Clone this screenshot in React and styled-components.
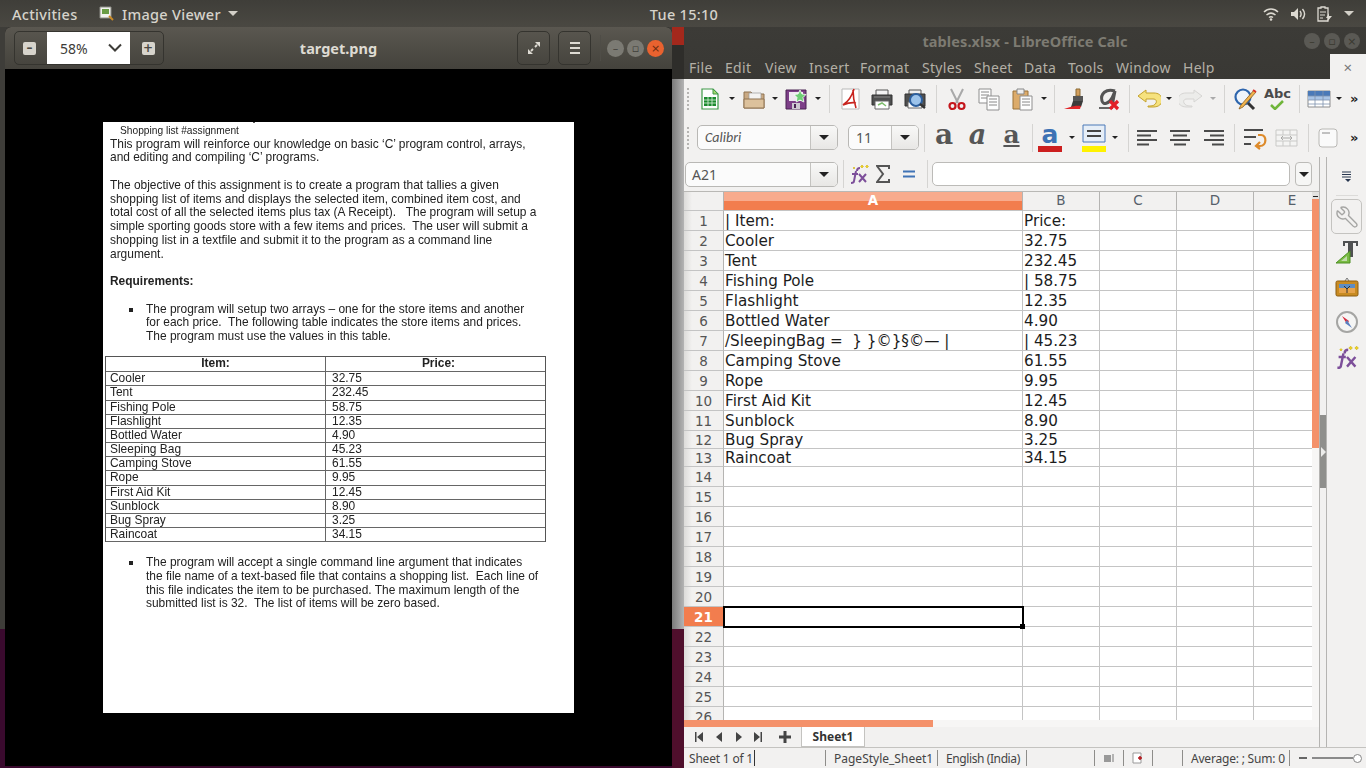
import React from 'react';
import styled, { createGlobalStyle } from 'styled-components';
import { Wrench as WrenchGlyph } from 'lucide-react';

const uiFont = `"Noto Sans", "DejaVu Sans", sans-serif`;
const orange = '#f4916a';

const Global = createGlobalStyle`
html, body { margin: 0; padding: 0; background: #000; }
* { box-sizing: border-box; }
`;

const Desktop = styled.div`
position: relative;
width: 1366px;
height: 768px;
overflow: hidden;
background: #3a0a2e;
font-family: ${uiFont};
`;

/* desktop top bar */
const TopBar = styled.div`
height: 27px;
display: flex;
align-items: center;
background: linear-gradient(#3f3e39, #4a4842);
color: #d6d3cb;
font-size: 14.5px;
font-weight: 500;
letter-spacing: 0.3px;
`;
const Activities = styled.div`
width: 99px;
padding-left: 12px;
`;
const AppMenu = styled.div`
width: 483px;
display: flex;
align-items: center;
gap: 7px;
`;
const Clock = styled.div`
width: 204px;
text-align: center;
`;
const Tray = styled.div`
flex: 1;
display: flex;
justify-content: flex-end;
align-items: center;
gap: 11px;
padding-right: 12px;
`;
const Caret = styled.span`
display: inline-block;
width: 0;
height: 0;
border-left: ${p => p.$s || 5}px solid transparent;
border-right: ${p => p.$s || 5}px solid transparent;
border-top: ${p => p.$s || 5}px solid ${p => p.$c || '#d3d0c8'};
`;

/* windows behind */
const BackWindow = styled.div`
position: absolute;
left: 0;
top: 27px;
width: 684px;
height: 602px;
background: #3e3d39;
`;
const RedCorner = styled.div`
position: absolute;
left: 672px;
top: 27px;
width: 12px;
height: 18px;
background: #a3281c;
`;
const BackShade = styled.div`
position: absolute;
left: 672px;
top: 45px;
width: 12px;
height: 34px;
background: #2e2d2a;
`;
const BackGrey = styled.div`
position: absolute;
left: 672px;
top: 79px;
width: 12px;
height: 550px;
background: linear-gradient(90deg, #7a7a7a, #b4b4b4);
`;
const BackMaroon = styled.div`
position: absolute;
left: 672px;
top: 629px;
width: 12px;
height: 139px;
background: #4f0f2c;
`;

/* image viewer window */
const ViewerWindow = styled.div`
position: absolute;
left: 5px;
top: 27px;
width: 667px;
height: 739px;
display: flex;
flex-direction: column;
background: #000;
border-radius: 6px 6px 0 0;
overflow: hidden;
`;
const ViewerHeader = styled.div`
height: 42px;
display: flex;
align-items: center;
padding: 0 8px 0 9px;
background: linear-gradient(#5a5750, #44423c);
color: #dedbd3;
`;
const ZoomGroup = styled.div`
width: 150px;
height: 34px;
display: flex;
border: 1px solid #35342f;
border-radius: 5px;
overflow: hidden;
`;
const ZoomBtn = styled.div`
width: ${p => p.$w}px;
padding: ${p => p.$pad};
display: flex;
align-items: center;
justify-content: center;
`;
const ZoomSquare = styled.div`
width: 13px;
height: 13px;
border-radius: 2px;
background: #d7d4cc;
display: flex;
align-items: center;
justify-content: center;
color: #4a4842;
font: bold 12px/13px "DejaVu Sans", sans-serif;
`;
const ZoomField = styled.div`
flex: 1;
background: #fff;
display: flex;
align-items: center;
justify-content: space-between;
padding: 0 8px 0 13px;
font-size: 14px;
color: #3d3c38;
`;
const ViewerTitle = styled.div`
flex: 1;
text-align: center;
font-size: 14.5px;
font-weight: 700;
padding-left: 4px;
`;
const HeaderBtn = styled.div`
width: 33px;
height: 34px;
margin-left: 8px;
display: flex;
align-items: center;
justify-content: center;
border: 1px solid #35342f;
border-radius: 5px;
`;
const HeaderSep = styled.div`
width: 1px;
height: 26px;
margin: 0 6px 0 9px;
background: #4f4d47;
`;
const WinDots = styled.div`
display: flex;
gap: ${p => p.$gap}px;
align-items: center;
`;
const WinDot = styled.div`
width: ${p => p.$s}px;
height: ${p => p.$s}px;
border-radius: 50%;
display: flex;
align-items: center;
justify-content: center;
background: ${p => p.$bg};
color: ${p => p.$fg};
font: 11px/1 "DejaVu Sans", sans-serif;
`;
const ViewerBody = styled.div`
flex: 1;
padding: 53px 0 0 98px;
`;
const Page = styled.div`
position: relative;
width: 471px;
height: 591px;
background: #fff;
padding: 1.5px 20px 0 7px;
color: #222;
font: 11.95px/13.75px "Liberation Sans", Arial, sans-serif;
white-space: pre;
filter: blur(0.3px);
&::before {
  content: '';
  position: absolute;
  left: 150px;
  top: 0;
  width: 2px;
  height: 1px;
  background: #555;
}
`;
const PageHead = styled.div`
font-size: 10.2px;
line-height: 14px;
padding-left: 10px;
`;
const Para = styled.p`
margin: 0 0 13.75px;
`;
const PageHeading = styled(Para)`
font-weight: 700;
`;
const BulletList = styled.ul`
margin: 0 0 12.5px;
padding: 0 0 0 36px;
list-style: none;
position: relative;
`;
const Bullet = styled.li`
&::before {
  content: '';
  position: absolute;
  left: 19px;
  top: 5px;
  width: 4px;
  height: 4px;
  background: #222;
}
`;
const DocTable = styled.div`
width: 441px;
margin: 0 0 14px -5px;
border: 1px solid #555;
border-bottom: 0;
`;
const DocRow = styled.div`
display: grid;
grid-template-columns: 219px 1fr;
height: ${p => p.$h}px;
border-bottom: 1px solid #666;
line-height: 12.5px;
`;
const DocCell = styled.div`
padding-left: ${p => (p.$head ? 0 : 5)}px;
text-align: ${p => (p.$head ? 'center' : 'left')};
font-weight: ${p => (p.$head ? 700 : 400)};
&:first-child { padding-left: ${p => (p.$head ? 0 : 4)}px; }
& + & { border-left: 1px solid #666; padding-left: ${p => (p.$head ? 0 : 6)}px; }
`;

/* calc window */
const CalcWindow = styled.div`
position: absolute;
left: 684px;
top: 27px;
width: 682px;
height: 741px;
display: flex;
flex-direction: column;
background: #f2f1f0;
color: #3c3c3c;
`;
const CalcTitleBar = styled.div`
height: 52px;
background: linear-gradient(#3c3b37, #393834);
display: flex;
flex-direction: column;
`;
const CalcTitleRow = styled.div`
height: 27px;
display: flex;
align-items: center;
justify-content: center;
position: relative;
color: #7d7b72;
font-size: 14.5px;
font-weight: 700;
letter-spacing: 0.1px;
`;
const CalcDots = styled.div`
position: absolute;
right: 6px;
top: 6px;
`;
const MenuBar = styled.div`
flex: 1;
display: flex;
align-items: center;
padding-left: 5px;
color: #b4b0a6;
font-size: 14px;
letter-spacing: 0.3px;
`;
const MenuItem = styled.div`
width: ${p => p.$w}px;
flex: none;
padding-top: 1px;
`;
const DocClose = styled.div`
margin-left: auto;
width: 36px;
height: 100%;
background: #f2f1f0;
color: #777;
display: flex;
align-items: center;
justify-content: center;
font-size: 15px;
`;
const ToolRow = styled.div`
height: ${p => p.$h}px;
display: flex;
align-items: center;
flex: none;
`;
const Grip = styled.div`
width: 10px;
height: 24px;
flex: none;
background: radial-gradient(circle, #b5b4b2 1px, transparent 1.2px) 2px 0 / 4px 4px repeat-y;
`;
const Slot = styled.div`
width: ${p => p.$w}px;
flex: none;
display: flex;
align-items: center;
justify-content: center;
`;
const Sep = styled.div`
width: 10px;
flex: none;
height: 28px;
display: flex;
justify-content: center;
&::after { content: ''; width: 1px; background: #d5d4d2; }
`;
const More = styled.div`
margin-left: auto;
width: 16px;
font: bold 13px/1 "DejaVu Sans", sans-serif;
color: #222;
`;
const Combo = styled.div`
width: ${p => p.$w}px;
height: 25px;
flex: none;
display: flex;
background: #fbfbfb;
border: 1px solid #b9b8b5;
border-radius: 5px;
overflow: hidden;
font: ${p => (p.$italic ? 'italic' : 'normal')} 14px/23px ${p => (p.$italic ? '"Carlito", "Open Sans"' : uiFont)}, sans-serif;
color: #555;
`;
const ComboText = styled.div`
flex: 1;
padding-left: ${p => p.$pad || 7}px;
`;
const ComboArrow = styled.div`
width: 27px;
display: flex;
align-items: center;
justify-content: center;
background: linear-gradient(#f8f8f7, #e8e7e5);
border-left: 1px solid #c4c3c0;
`;
const StyleA = styled.span`
font-family: "DejaVu Serif", serif;
font-weight: 700;
font-size: ${p => p.$size}px;
line-height: 24px;
height: 24px;
margin-top: -6px;
color: #565656;
font-style: ${p => (p.$i ? 'italic' : 'normal')};
text-decoration: ${p => (p.$u ? 'underline' : 'none')};
text-decoration-thickness: 2px;
text-underline-offset: 2px;
`;
const FontColorA = styled.div`
width: 24px;
height: 28px;
display: flex;
flex-direction: column;
align-items: center;
justify-content: space-between;
color: #3d72b4;
font: bold 25px/21px "DejaVu Sans", sans-serif;
`;
const ColorBar = styled.div`
width: 24px;
height: 6px;
flex: none;
background: ${p => p.$c};
`;

const CalcMain = styled.div`
flex: 1;
min-height: 0;
display: flex;
`;
const SheetColumn = styled.div`
width: 635px;
flex: none;
display: flex;
flex-direction: column;
`;
const FormulaRow = styled(ToolRow)`
padding-left: 1px;
`;
const FormulaInput = styled.div`
width: 358px;
height: 24px;
flex: none;
background: #fff;
border: 1px solid #bcbbb8;
border-radius: 5px;
`;
const FormulaDrop = styled.div`
width: 17px;
height: 24px;
flex: none;
margin-left: 5px;
display: flex;
align-items: center;
justify-content: center;
background: #f6f6f5;
border: 1px solid #bcbbb8;
border-radius: 4px;
`;
const SheetBody = styled.div`
flex: 1;
min-height: 0;
display: flex;
border-top: 1px solid #b9b8b5;
`;
const Grid = styled.div`
width: 628px;
flex: none;
overflow: hidden;
background: #fff;
font: 15.2px/1 "DejaVu Sans", sans-serif;
color: #1c1c1c;
`;
const GridRow = styled.div`
display: flex;
height: ${p => p.$h}px;
`;
const RowHead = styled.div`
width: 40px;
flex: none;
display: flex;
align-items: center;
justify-content: center;
padding-top: 2px;
font-size: 13.5px;
border-right: 1px solid #b5b4b2;
border-bottom: 1px solid #c4c4c4;
color: ${p => (p.$on ? '#fff' : '#555')};
font-weight: ${p => (p.$on ? 700 : 400)};
background: ${p => (p.$on ? '#f27d4e' : 'linear-gradient(90deg, #dcdbd9, #f2f1f0 8px)')};
`;
const ColHead = styled.div`
width: ${p => p.$w}px;
flex: none;
display: flex;
align-items: center;
justify-content: center;
font-size: 13.5px;
border-right: 1px solid #b5b4b2;
border-bottom: 1px solid #c4c4c4;
color: ${p => (p.$on ? '#fff' : '#56606a')};
font-weight: ${p => (p.$on ? 700 : 400)};
background: ${p => (p.$on ? 'linear-gradient(#f8ab8d 50%, #f27d4e 50%)' : '#f2f1f0')};
`;
const Cell = styled.div`
position: relative;
width: ${p => p.$w}px;
flex: none;
padding: 3px 0 0 1px;
white-space: pre;
display: flex;
align-items: center;
border-right: 1px solid #c4c4c4;
border-bottom: 1px solid #c4c4c4;
${p => p.$sel && `
  outline: 2px solid #000;
  outline-offset: -1px;
  z-index: 1;
  &::after {
    content: '';
    position: absolute;
    right: -3px;
    bottom: -3px;
    width: 5px;
    height: 5px;
    background: #000;
  }
`}
`;
const VScroll = styled.div`
width: 7px;
flex: none;
display: flex;
flex-direction: column;
background: #f7f6f5;
`;
const VScrollCap = styled.div`
height: 7px;
background: #e4e3e1;
border-top: 2px solid transparent;
display: flex;
align-items: center;
justify-content: center;
&::after { content: ''; width: 5px; height: 1px; background: #222; }
`;
const VScrollThumb = styled.div`
height: 249px;
background: ${orange};
`;
const HScrollRow = styled.div`
height: 7px;
flex: none;
display: flex;
background: #f7f6f5;
`;
const HScrollThumb = styled.div`
width: 249px;
background: ${orange};
`;
const TabsRow = styled.div`
height: 20px;
flex: none;
display: flex;
align-items: center;
`;
const SheetTab = styled.div`
width: 64px;
height: 20px;
display: flex;
align-items: center;
justify-content: center;
background: #fff;
border: 1px solid #c4c3c0;
border-top: 0;
font-size: 12px;
font-weight: 700;
color: #333;
`;
const SplitBar = styled.div`
width: 7px;
flex: none;
display: flex;
flex-direction: column;
padding-top: 258px;
border-left: 1px solid #b5b4b2;
`;
const SplitHandle = styled.div`
height: 73px;
background: #8f8f8c;
display: flex;
align-items: center;
justify-content: center;
&::after {
  content: '';
  border-top: 5px solid transparent;
  border-bottom: 5px solid transparent;
  border-left: 5px solid #ececea;
}
`;
const Sidebar = styled.div`
flex: 1;
display: flex;
flex-direction: column;
align-items: center;
border-left: 1px solid #b5b4b2;
padding-top: 14px;
`;
const SideSep = styled.div`
width: 22px;
height: 1px;
margin: 12px 0 3px;
background: #dcdbd9;
`;
const SideBtn = styled.div`
width: 31px;
height: 35px;
display: flex;
align-items: center;
justify-content: center;
${p => p.$on && `border: 1px solid #c4c3c0; border-radius: 5px;`}
`;
const FlippedWrench = styled(WrenchGlyph)`
transform: scaleX(-1);
color: #a5a5a3;
`;
const StatusBar = styled.div`
height: 21px;
flex: none;
display: flex;
align-items: center;
border-top: 1px solid #c4c3c0;
font-size: 12px;
color: #444;
`;
const StatusCell = styled.div`
width: ${p => p.$w}px;
flex: none;
height: 16px;
display: flex;
align-items: center;
justify-content: ${p => (p.$center ? 'center' : 'flex-start')};
padding-left: ${p => (p.$center ? 0 : p.$pad ?? 8)}px;
letter-spacing: ${p => p.$ls ?? -0.2}px;
border-right: 1px solid #8e8d8a;
white-space: nowrap;
`;
const TextCursor = styled.span`
width: 1px;
height: 16px;
margin-left: 1px;
background: #333;
`;
const SliderWrap = styled.div`
flex: 1;
display: flex;
align-items: center;
padding-left: 9px;
`;
const SliderDash = styled.div`
width: 8px;
height: 2px;
background: #666;
margin-right: 5px;
`;
const SliderLine = styled.div`
width: 41px;
height: 2px;
background: #8a8a8a;
`;
const SliderKnob = styled.div`
width: 9px;
height: 9px;
border: 1px solid #888;
border-radius: 50%;
background: #fff;
`;

/* icons */
const Svg = ({ w = 24, h = 24, children }) => (
  <svg width={w} height={h} viewBox={`0 0 ${w} ${h}`} fill="none">{children}</svg>
);
const Drop = () => <Caret $s={3} $c="#222" />;
const DropOff = () => <Caret $s={3} $c="#aaa" />;
const BigDrop = () => <Caret $s={5} $c="#222" />;

const NewDoc = () => (
  <Svg>
    <path d="M4 2h11l5 5v15H4z" fill="#fdfdfd" stroke="#3f9a48" strokeWidth="1.2" />
    <path d="M15 2v5h5z" fill="#a9d86e" stroke="#3f9a48" />
    <path d="M6 10h12v9H6z" fill="#1b8a2e" />
    <path d="M6 13h12M6 16h12M10 10v9M14 10v9" stroke="#dff2df" strokeWidth=".8" />
  </Svg>
);
const Folder = () => (
  <Svg>
    <path d="M2 5h7l2 2h11v14H2z" fill="#c9a983" stroke="#8f7251" />
    <path d="M7 6h12v7H7z" fill="#f4f3f1" stroke="#999" strokeWidth=".7" />
    <path d="M2 12h20v9H2z" fill="#dcc19c" stroke="#8f7251" />
  </Svg>
);
const Floppy = () => (
  <Svg>
    <path d="M2 3h20v19H2z" fill="#7d3f88" stroke="#4a2353" />
    <path d="M5 5h14v9H5z" fill="#efe9f0" />
    <path d="M8 16h8v6H8z" fill="#cfc9d2" />
    <path d="M10 17h2v4h-2z" fill="#4a2353" />
    <path d="M16 3l2 4 4 .5-3 3 .8 4.500-3.800-2-3.800 2 .8-4.500-3-3 4-.5z" fill="#6fce76" stroke="#fff" strokeWidth=".8" />
  </Svg>
);
const PdfIcon = () => (
  <Svg>
    <path d="M4 2h17v20H4z" fill="#fff" stroke="#b9b9b9" />
    <path d="M16 2c-2 7-5 12-11 16 5-2 9-3 13-2M15 3c0 6 1 12 3 18" stroke="#c8241f" strokeWidth="1.600" />
  </Svg>
);
const Printer = () => (
  <Svg>
    <path d="M6 3h12v6H6z" fill="#f3f3f3" stroke="#555" />
    <path d="M2 8h20v10H2z" fill="#4e4f4f" stroke="#333" />
    <path d="M5 14h14v8H5z" fill="#fff" stroke="#666" />
    <path d="M8 18l4-2 4 3" stroke="#7dbd6c" strokeWidth="1.500" />
    <path d="M4 10h16" stroke="#888" />
  </Svg>
);
const Preview = () => (
  <Svg>
    <path d="M6 3h12v5H6z" fill="#efefef" stroke="#555" />
    <path d="M2 7h20v12H2z" fill="#4e4f4f" stroke="#333" />
    <path d="M5 15h14v6H5z" fill="#fff" stroke="#666" />
    <circle cx="13" cy="13" r="6" fill="#9cc3ea" stroke="#2c5f9e" strokeWidth="2" />
    <path d="M17 17l5 4" stroke="#333" strokeWidth="2.400" />
  </Svg>
);
const Scissors = () => (
  <Svg>
    <path d="M6 2l7 14M18 2l-7 14" stroke="#a9a9a9" strokeWidth="2" />
    <circle cx="7.500" cy="19" r="3" stroke="#c4161c" strokeWidth="2.200" />
    <circle cx="16.500" cy="19" r="3" stroke="#c4161c" strokeWidth="2.200" />
  </Svg>
);
const DocLines = ({ x, y, w = 12, h = 14 }) => (
  <g>
    <path d={`M${x} ${y}h${w}v${h}h-${w}z`} fill="#fdfdfd" stroke="#8f8f8f" />
    <path d={`M${x + 2} ${y + 3}h${w - 4}M${x + 2} ${y + 6}h${w - 4}M${x + 2} ${y + 9}h${w - 4}`} stroke="#888" />
  </g>
);
const CopyIcon = () => (
  <Svg><DocLines x={2} y={2} /><DocLines x={10} y={9} /></Svg>
);
const PasteIcon = () => (
  <Svg>
    <path d="M3 4h15v18H3z" fill="#dcab6a" stroke="#9a7238" />
    <path d="M7 2h7v5H7z" fill="#eee" stroke="#888" />
    <DocLines x={10} y={9} w={12} h={14} />
  </Svg>
);
const Brush = () => (
  <Svg>
    <path d="M13 2h4v7h-4z" fill="#d39f5d" stroke="#8b6a34" />
    <path d="M10 9h10v5H10z" fill="#555" />
    <path d="M10 14h10l-2 6H8z" fill="#3b3b3b" />
    <path d="M1 22c5-1 9-4 17-3l-1 3z" fill="#e1262a" />
  </Svg>
);
const ClearFmt = () => (
  <Svg>
    <path d="M3 21h14" stroke="#666" strokeWidth="2" />
    <path d="M19 4c-9-3-15 3-13 10 1 4 7 3 10-3l3-7-2 10c0 2 1 3 2 3" stroke="#555" strokeWidth="3" />
    <path d="M14 14l8 8M22 14l-8 8" stroke="#e21f26" strokeWidth="3.200" />
  </Svg>
);
const UndoPath = ({ fill, stroke }) => (
  <path d="M9 3L1 9l8 6v-3h7c3 0 4 2 3 4-1 2-3 3-6 3h-2v1h5c6 0 9-3 9-7 0-5-4-7-8-7H9z" fill={fill} stroke={stroke} />
);
const Undo = () => (
  <Svg><UndoPath fill="#f6e27e" stroke="#c4a22c" /></Svg>
);
const Redo = () => (
  <Svg><g transform="matrix(-1 0 0 1 24 0)"><UndoPath fill="#ececea" stroke="#d6d5d3" /></g></Svg>
);
const FindIcon = () => (
  <Svg>
    <circle cx="10" cy="10" r="7.500" fill="#eef4fb" stroke="#2d65ad" strokeWidth="2.200" />
    <path d="M15 16l6 6" stroke="#333" strokeWidth="3" />
    <path d="M21 3L8 18l-2 4 4-2L23 5z" fill="#f0b34e" stroke="#8a5f1d" strokeWidth=".8" />
    <path d="M20 3l3 2" stroke="#d8312b" strokeWidth="2" />
  </Svg>
);
const SpellWord = styled.div`
display: flex;
flex-direction: column;
align-items: center;
font: bold 13px/13px "DejaVu Sans", sans-serif;
color: #4a4a4a;
`;
const SpellIcon = () => (
  <SpellWord>
    Abc
    <svg width="14" height="10" viewBox="0 0 14 10" fill="none"><path d="M1 5l4 4 8-8" stroke="#6fb53a" strokeWidth="2.500" /></svg>
  </SpellWord>
);
const TableIcon = () => (
  <Svg h={18}>
    <path d="M1 1h22v16H1z" fill="#fff" stroke="#8d8d8d" />
    <path d="M1 1h22v5H1z" fill="#4a79b8" />
    <path d="M1 6h22v4H1z" fill="#a9c4e6" />
    <path d="M1 6h22M1 10h22M1 14h22M8 1v16M16 1v16" stroke="#7d93ad" strokeWidth=".8" />
  </Svg>
);
const HighlightIcon = () => (
  <Svg h={28}>
    <path d="M1 1h22v17H1z" fill="#e6eef7" stroke="#4a79b8" />
    <path d="M5 7h14M5 12h14" stroke="#444" strokeWidth="2" />
    <path d="M0 22h24v6H0z" fill="#fff200" />
  </Svg>
);
const AlignIcon = ({ rows }) => (
  <Svg w={20} h={20}>
    {rows.map(([x, w], i) => (
      <path key={i} d={`M${x} ${3 + i * 4.500}h${w}`} stroke="#4a4a4a" strokeWidth="2" />
    ))}
  </Svg>
);
const WrapIcon = () => (
  <Svg>
    <path d="M1 4h19M1 11h12M1 18h7" stroke="#4a4a4a" strokeWidth="2" />
    <path d="M15 9h3c6 0 6 11-1 11h-3m3-4l-4 4 4 3" stroke="#dd8a2a" strokeWidth="2.200" />
  </Svg>
);
const MergeIcon = () => (
  <Svg h={18}>
    <path d="M1 1h21v16H1z" fill="#f4f4f3" stroke="#c9c9c7" />
    <path d="M1 6h21M1 12h21M8 1v5M15 1v5M8 12v5M15 12v5" stroke="#c9c9c7" />
    <path d="M6 9h11M6 9l2-2M6 9l2 2M17 9l-2-2M17 9l-2 2" stroke="#a9a9a7" />
  </Svg>
);
const BoxIcon = () => (
  <Svg w={20} h={20}>
    <rect x="1" y="1" width="18" height="18" rx="3" fill="#fafafa" stroke="#b9b8b5" />
    <path d="M4 5h8" stroke="#888" />
  </Svg>
);
const FxIcon = ({ s = 20 }) => (
  <svg width={s} height={s} viewBox="0 0 20 20" fill="none">
    <path d="M8 7c0-2 1-3 3-3M7 7l-2 10c0 2-2 2-3 2M3 10h6" stroke="#7d4f9a" strokeWidth="2" />
    <path d="M10 10l7 8M17 10l-7 8" stroke="#7d4f9a" strokeWidth="2" />
    <path d="M5 3l1 1-1 1-1-1zM13 1l1.500 1.500L13 4l-1.500-1.500zM18 1l1.500 1.500L18 4l-1.500-1.500z" fill="#f0d21e" stroke="#c4a90f" strokeWidth=".5" />
  </svg>
);
const Sigma = () => (
  <Svg w={14} h={18}>
    <path d="M13 4V1H1l6 8-6 8h12v-3" stroke="#555" strokeWidth="2" />
  </Svg>
);
const EqualIcon = () => (
  <Svg w={14} h={12}>
    <path d="M1 3.500h12M1 8.500h12" stroke="#3f73b5" strokeWidth="2.200" />
  </Svg>
);
const Wifi = () => (
  <Svg w={16} h={14}>
    <path d="M1 5c4-4 10-4 14 0M3.500 8c3-2.500 6-2.500 9 0M6 10.500c1.300-1 2.700-1 4 0" stroke="#dcd9d1" strokeWidth="1.500" />
    <circle cx="8" cy="12.500" r="1.300" fill="#dcd9d1" />
  </Svg>
);
const Speaker = () => (
  <Svg w={16} h={14}>
    <path d="M1 5h3l4-4v12l-4-4H1z" fill="#dcd9d1" />
    <path d="M10 4c1.500 2 1.500 4 0 6M12.500 2c2.500 3 2.500 7 0 10" stroke="#dcd9d1" strokeWidth="1.400" />
  </Svg>
);
const Battery = () => (
  <Svg w={16} h={16}>
    <path d="M4 1h4v1h3v13H1V2h3z" stroke="#dcd9d1" strokeWidth="1.300" />
    <path d="M3 6h6M3 9h5M3 12h3" stroke="#dcd9d1" />
    <path d="M12 7l-3 5h2l-1 4 5-6h-3z" fill="#dcd9d1" />
  </Svg>
);
const Expand = () => (
  <Svg w={16} h={16}>
    <path d="M9 2h5v5zM2 14v-5l5 5z" fill="#dedbd3" />
    <path d="M11 5l-2 2M5 11l2-2" stroke="#dedbd3" strokeWidth="1.800" />
  </Svg>
);
const Hamburger = () => (
  <Svg w={12} h={14}>
    <path d="M1 2h10M1 7h10M1 12h10" stroke="#dedbd3" strokeWidth="2" />
  </Svg>
);
const ChevronDown = () => (
  <Svg w={14} h={10}>
    <path d="M1 1.500l6 6 6-6" stroke="#3d3c38" strokeWidth="2" />
  </Svg>
);
const ViewerApp = () => (
  <Svg w={16} h={16}>
    <path d="M1 1h11v11H1z" fill="#f2f2ee" stroke="#8d8d86" />
    <path d="M3 3h7v5H3z" fill="#6a9c45" />
    <path d="M10 10l4 4" stroke="#c98a26" strokeWidth="2" />
  </Svg>
);
const SideMenuIcon = () => (
  <Svg w={12} h={12}>
    <path d="M1 1h9M1 3.500h9M1 6h9" stroke="#27364f" />
    <path d="M4 8h6l-3 3z" fill="#27364f" />
  </Svg>
);
const StyleSideIcon = () => (
  <Svg h={24}>
    <path d="M8 1h15v5h-2V3h-3v14h-5V3h-3v3H8z" fill="#4f5152" />
    <path d="M1 23L15 11v12z" fill="#79bb43" stroke="#4d8f22" />
    <path d="M6 21l6-5v5z" fill="#f2f1f0" opacity=".6" />
  </Svg>
);
const Gallery = () => (
  <Svg h={20}>
    <path d="M10 4l2-3 2 3" stroke="#777" />
    <rect x="1" y="4" width="22" height="15" rx="1.500" fill="#c88b22" stroke="#8c5d11" />
    <path d="M4 7h16v9H4z" fill="#e6a34b" />
    <path d="M4 7h16v4H4z" fill="#5c8cc4" />
    <path d="M12 16v-5M12 12l-3-3M12 12l3-3" stroke="#333" />
  </Svg>
);
const Compass = () => (
  <Svg>
    <circle cx="12" cy="12" r="10" fill="#f5f5f4" stroke="#a5a5a3" strokeWidth="2" />
    <path d="M7 6l7 5-2 3z" fill="#d7283a" />
    <path d="M17 18l-7-5 2-3z" fill="#5a7fc0" />
  </Svg>
);
const NavFirst = () => (
  <Svg w={10} h={12}><path d="M1 1h1.500v10H1zM9 1v10L3 6z" fill="#444" /></Svg>
);
const NavPrev = () => (
  <Svg w={8} h={12}><path d="M7 1v10L1 6z" fill="#444" /></Svg>
);
const NavNext = () => (
  <Svg w={8} h={12}><path d="M1 1v10l6-5z" fill="#444" /></Svg>
);
const NavLast = () => (
  <Svg w={10} h={12}><path d="M1 1v10l6-5zM7.500 1H9v10H7.500z" fill="#444" /></Svg>
);
const NavPlus = () => (
  <Svg w={12} h={12}><path d="M4.500 0h3v4.500H12v3H7.500V12h-3V7.500H0v-3h4.500z" fill="#444" /></Svg>
);

const doc = [
  ['Cooler', '32.75'], ['Tent', '232.45'], ['Fishing Pole', '58.75'], ['Flashlight', '12.35'],
  ['Bottled Water', '4.90'], ['Sleeping Bag', '45.23'], ['Camping Stove', '61.55'], ['Rope', '9.95'],
  ['First Aid Kit', '12.45'], ['Sunblock', '8.90'], ['Bug Spray', '3.25'], ['Raincoat', '34.15'],
];
const sheet = [
  ['| Item:', 'Price:'], ['Cooler', '32.75'], ['Tent', '232.45'], ['Fishing Pole', '| 58.75'],
  ['Flashlight', '12.35'], ['Bottled Water', '4.90'], ['/SleepingBag =  } }©}§©— |', '| 45.23'],
  ['Camping Stove', '61.55'], ['Rope', '9.95'], ['First Aid Kit', '12.45'], ['Sunblock', '8.90'],
  ['Bug Spray', '3.25'], ['Raincoat', '34.15'],
];
const menus = [['File', 36], ['Edit', 40], ['View', 44], ['Insert', 51], ['Format', 62], ['Styles', 52], ['Sheet', 50], ['Data', 44], ['Tools', 48], ['Window', 67], ['Help', 30]];
const colWidths = [299, 77, 77, 77, 77];
const colNames = ['A', 'B', 'C', 'D', 'E'];
const rowHeight = n => (n === 12 || n === 13 ? 18 : 20);
const rows = Array.from({ length: 26 }, (_, i) => i + 1);

function ImageViewer() {
  return (
    <ViewerWindow>
      <ViewerHeader>
        <ZoomGroup>
          <ZoomBtn $w={32} $pad="0 3px 0 0"><ZoomSquare>–</ZoomSquare></ZoomBtn>
          <ZoomField>58%<ChevronDown /></ZoomField>
          <ZoomBtn $w={33} $pad="0 0 0 3px"><ZoomSquare>+</ZoomSquare></ZoomBtn>
        </ZoomGroup>
        <ViewerTitle>target.png</ViewerTitle>
        <HeaderBtn><Expand /></HeaderBtn>
        <HeaderBtn><Hamburger /></HeaderBtn>
        <HeaderSep />
        <WinDots $gap={3}>
          <WinDot $s={17} $bg="#7b7a73" $fg="#3f3e39">–</WinDot>
          <WinDot $s={17} $bg="#7b7a73" $fg="#3f3e39">▫</WinDot>
          <WinDot $s={17} $bg="#e9622f" $fg="#6b2a10">×</WinDot>
        </WinDots>
      </ViewerHeader>
      <ViewerBody>
        <Page>
          <PageHead>Shopping list #assignment</PageHead>
          <Para>
            This program will reinforce our knowledge on basic ‘C’ program control, arrays,<br />
            and editing and compiling ‘C’ programs.
          </Para>
          <Para>
            The objective of this assignment is to create a program that tallies a given<br />
            shopping list of items and displays the selected item, combined item cost, and<br />
            total cost of all the selected items plus tax (A Receipt).   The program will setup a<br />
            simple sporting goods store with a few items and prices.  The user will submit a<br />
            shopping list in a textfile and submit it to the program as a command line<br />
            argument.
          </Para>
          <PageHeading>Requirements:</PageHeading>
          <BulletList>
            <Bullet>
              The program will setup two arrays – one for the store items and another<br />
              for each price.  The following table indicates the store items and prices.<br />
              The program must use the values in this table.
            </Bullet>
          </BulletList>
          <DocTable>
            <DocRow $h={15}><DocCell $head>Item:</DocCell><DocCell $head>Price:</DocCell></DocRow>
            {doc.map(([item, price]) => (
              <DocRow key={item} $h={14.17}><DocCell>{item}</DocCell><DocCell>{price}</DocCell></DocRow>
            ))}
          </DocTable>
          <BulletList>
            <Bullet>
              The program will accept a single command line argument that indicates<br />
              the file name of a text-based file that contains a shopping list.  Each line of<br />
              this file indicates the item to be purchased. The maximum length of the<br />
              submitted list is 32.  The list of items will be zero based.
            </Bullet>
          </BulletList>
        </Page>
      </ViewerBody>
    </ViewerWindow>
  );
}

function Toolbars() {
  return (
    <>
      <ToolRow $h={39}>
        <Grip />
        <Slot $w={32}><NewDoc /></Slot><Slot $w={12}><Drop /></Slot>
        <Slot $w={31}><Folder /></Slot><Slot $w={11}><Drop /></Slot>
        <Slot $w={32}><Floppy /></Slot><Slot $w={12}><Drop /></Slot>
        <Sep />
        <Slot $w={31}><PdfIcon /></Slot><Slot $w={33}><Printer /></Slot><Slot $w={33}><Preview /></Slot>
        <Sep />
        <Slot $w={31}><Scissors /></Slot><Slot $w={34}><CopyIcon /></Slot><Slot $w={32}><PasteIcon /></Slot><Slot $w={11}><Drop /></Slot>
        <Sep />
        <Slot $w={32}><Brush /></Slot><Slot $w={33}><ClearFmt /></Slot>
        <Sep />
        <Slot $w={29}><Undo /></Slot><Slot $w={12}><Drop /></Slot>
        <Slot $w={32}><Redo /></Slot><Slot $w={12}><DropOff /></Slot>
        <Sep />
        <Slot $w={32}><FindIcon /></Slot><Slot $w={33}><SpellIcon /></Slot>
        <Sep />
        <Slot $w={29}><TableIcon /></Slot><Slot $w={12}><Drop /></Slot>
        <More>»</More>
      </ToolRow>
      <ToolRow $h={39}>
        <Grip />
        <Slot $w={3} />
        <Combo $w={141} $italic><ComboText>Calibri</ComboText><ComboArrow><BigDrop /></ComboArrow></Combo>
        <Slot $w={10} />
        <Combo $w={71}><ComboText>11</ComboText><ComboArrow><BigDrop /></ComboArrow></Combo>
        <Sep />
        <Slot $w={30}><StyleA $size={28}>a</StyleA></Slot>
        <Slot $w={37}><StyleA $size={27} $i>a</StyleA></Slot>
        <Slot $w={31}><StyleA $size={25} $u>a</StyleA></Slot>
        <Sep />
        <Slot $w={26}><FontColorA>a<ColorBar $c="#cc1f1f" /></FontColorA></Slot><Slot $w={18}><Drop /></Slot>
        <Slot $w={26}><HighlightIcon /></Slot><Slot $w={16}><Drop /></Slot>
        <Sep />
        <Slot $w={28}><AlignIcon rows={[[0, 20], [0, 14], [0, 20], [0, 12]]} /></Slot>
        <Slot $w={38}><AlignIcon rows={[[0, 20], [3, 14], [0, 20], [4, 12]]} /></Slot>
        <Slot $w={30}><AlignIcon rows={[[0, 20], [6, 14], [0, 20], [8, 12]]} /></Slot>
        <Sep />
        <Slot $w={31}><WrapIcon /></Slot>
        <Slot $w={33}><MergeIcon /></Slot>
        <Sep />
        <Slot $w={30}><BoxIcon /></Slot>
        <More>»</More>
      </ToolRow>
    </>
  );
}

function SheetGrid() {
  return (
    <Grid>
      <GridRow $h={19}>
        <RowHead />
        {colNames.map((name, i) => (
          <ColHead key={name} $w={colWidths[i]} $on={i === 0}>{name}</ColHead>
        ))}
      </GridRow>
      {rows.map(n => (
        <GridRow key={n} $h={rowHeight(n)}>
          <RowHead $on={n === 21}>{n}</RowHead>
          {colWidths.map((w, i) => (
            <Cell key={i} $w={w} $sel={n === 21 && i === 0}>{sheet[n - 1]?.[i]}</Cell>
          ))}
        </GridRow>
      ))}
    </Grid>
  );
}

function Calc() {
  return (
    <CalcWindow>
      <CalcTitleBar>
        <CalcTitleRow>
          tables.xlsx - LibreOffice Calc
          <CalcDots>
            <WinDots $gap={4}>
              <WinDot $s={16} $bg="#5a5954" $fg="#39382f">–</WinDot>
              <WinDot $s={16} $bg="#5a5954" $fg="#39382f">▫</WinDot>
              <WinDot $s={16} $bg="#5a5954" $fg="#39382f">×</WinDot>
            </WinDots>
          </CalcDots>
        </CalcTitleRow>
        <MenuBar>
          {menus.map(([m, w]) => <MenuItem key={m} $w={w}>{m}</MenuItem>)}
          <DocClose>×</DocClose>
        </MenuBar>
      </CalcTitleBar>
      <Toolbars />
      <CalcMain>
        <SheetColumn>
          <FormulaRow $h={34}>
            <Combo $w={153}><ComboText $pad={6}>A21</ComboText><ComboArrow><BigDrop /></ComboArrow></Combo>
            <Sep />
            <Slot $w={22}><FxIcon /></Slot>
            <Slot $w={26}><Sigma /></Slot>
            <Slot $w={26}><EqualIcon /></Slot>
            <Sep />
            <FormulaInput />
            <FormulaDrop><BigDrop /></FormulaDrop>
          </FormulaRow>
          <SheetBody>
            <SheetGrid />
            <VScroll>
              <VScrollCap />
              <VScrollThumb />
            </VScroll>
          </SheetBody>
          <HScrollRow>
            <HScrollThumb />
          </HScrollRow>
          <TabsRow>
            <Slot $w={5} />
            <Slot $w={20}><NavFirst /></Slot>
            <Slot $w={20}><NavPrev /></Slot>
            <Slot $w={19}><NavNext /></Slot>
            <Slot $w={20}><NavLast /></Slot>
            <Slot $w={33}><NavPlus /></Slot>
            <SheetTab>Sheet1</SheetTab>
          </TabsRow>
        </SheetColumn>
        <SplitBar><SplitHandle /></SplitBar>
        <Sidebar>
          <SideMenuIcon />
          <SideSep />
          <SideBtn $on><FlippedWrench size={24} strokeWidth={1.4} /></SideBtn>
          <SideBtn><StyleSideIcon /></SideBtn>
          <SideBtn><Gallery /></SideBtn>
          <SideBtn><Compass /></SideBtn>
          <SideBtn><FxIcon s={24} /></SideBtn>
        </Sidebar>
      </CalcMain>
      <StatusBar>
        <StatusCell $w={142} $pad={5}>Sheet 1 of 1<TextCursor /></StatusCell>
        <StatusCell $w={112} $ls={0}>PageStyle_Sheet1</StatusCell>
        <StatusCell $w={89} $ls={-0.4}>English (India)</StatusCell>
        <StatusCell $w={68} />
        <StatusCell $w={29} $center><Svg w={12} h={10}><path d="M1 2h7v7H1z" fill="#999" /><path d="M10 1v8" stroke="#777" /></Svg></StatusCell>
        <StatusCell $w={29} $center><Svg w={12} h={12}><path d="M1 1h8v10H1z" fill="#fff" stroke="#999" /><path d="M8 4v4M6 6h4" stroke="#b3141a" strokeWidth="1.500" /></Svg></StatusCell>
        <StatusCell $w={30} />
        <StatusCell $w={107}>Average: ; Sum: 0</StatusCell>
        <SliderWrap><SliderDash /><SliderLine /><SliderKnob /></SliderWrap>
      </StatusBar>
    </CalcWindow>
  );
}

export default function App() {
  return (
    <Desktop>
      <Global />
      <TopBar>
        <Activities>Activities</Activities>
        <AppMenu><ViewerApp />Image Viewer <Caret /></AppMenu>
        <Clock>Tue 15:10</Clock>
        <Tray><Wifi /><Speaker /><Battery /><Caret /></Tray>
      </TopBar>
      <BackWindow />
      <RedCorner />
      <BackShade />
      <BackGrey />
      <BackMaroon />
      <ImageViewer />
      <Calc />
    </Desktop>
  );
}
